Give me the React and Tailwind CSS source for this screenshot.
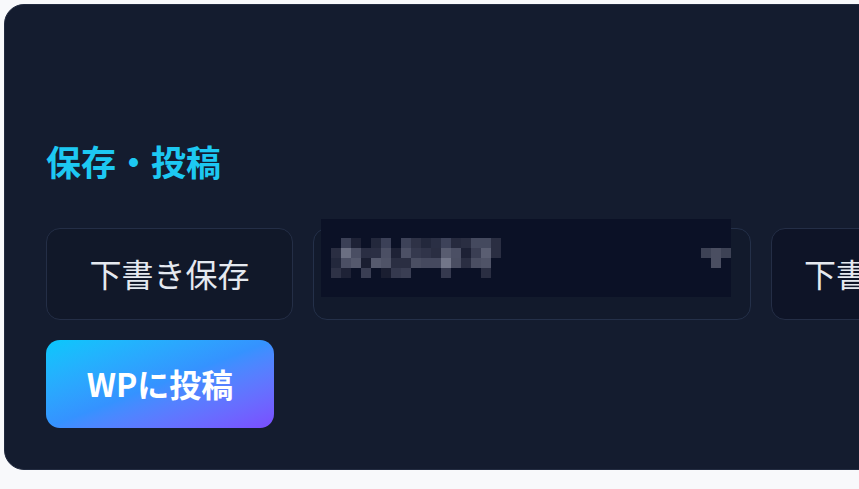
const font = { fontFamily: '"Noto Sans CJK JP", "Noto Sans", sans-serif' };

const rows = [
  ["", "#3b4056", "#1e2236", "", "#23283c", "#3b4057", "", "#3d4258", "#2e3246", "#23283c", "#2a2f44", "#3d4259", "#262a3e", "#2a2e42", "#44495e", "#44495e", "#2a2e42"],
  ["#2a2e42", "#6b6f82", "#4a4e63", "#2a2e43", "#2b2f44", "#4b4f64", "#1e2236", "#4c5065", "#35394e", "#303449", "#2a2e42", "#585c70", "#4b4f64", "#1d2135", "#3a3e53", "#5a5e72", "#2a2e42"],
  ["#23283c", "#4b4f64", "#55596d", "#1a1e31", "#565a6e", "#4f5367", "#2a2e42", "#2a2e42", "#4a4e62", "#45495e", "#45495e", "#727689", "#4a4e62", "#2a2e42", "#4a4e62", "#4f5367", ""],
  ["#2e3246", "#1e2236", "", "#3a3e53", "", "#1a1e31", "#35394e", "#3a3e53", "", "", "", "#35394e", "", "", "", "#2a2e42", ""],
];

function Mosaic() {
  return (
    <svg
      className="absolute left-[7px] top-[-10px]"
      width="410"
      height="78"
      viewBox="0 0 410 78"
    >
      <rect x="0" y="0" width="410" height="78" fill="#0b1126" />
      {rows.map((r, ri) =>
        r.map((c, ci) =>
          c ? (
            <rect key={ri + "-" + ci} x={10 + ci * 10} y={19 + ri * 10} width="10" height="10" fill={c} />
          ) : null
        )
      )}
      <rect x="380" y="29" width="10" height="10" fill="#3d4255" />
      <rect x="390" y="29" width="10" height="10" fill="#4a4e61" />
      <rect x="400" y="29" width="10" height="10" fill="#3d4255" />
      <rect x="390" y="39" width="10" height="10" fill="#4a4e61" />
    </svg>
  );
}

export default function App() {
  return (
    <div className="w-[859px] h-[489px] overflow-hidden bg-[#f8f9fb] pl-[4px] pt-[4px]" style={font}>
      <div className="w-[1100px] rounded-[20px] border border-[#222b40] bg-[#141c2f] pl-[41px] pt-[136px] pb-[41px]">
        <h2 className="text-[35px] font-bold leading-[40px] text-[#1dc8f2]">保存・投稿</h2>
        <div className="mt-[47px] flex gap-[20px]">
          <button className="flex h-[92px] w-[247px] items-center justify-center rounded-[14px] border border-[#242e46] bg-[#111829] pb-[2px] text-[32px] text-[#e5e9f0]">
            下書き保存
          </button>
          <div className="relative h-[92px] w-[438px] rounded-[14px] border border-[#243049] bg-[#121a2c]">
            <Mosaic />
          </div>
          <button className="flex h-[92px] w-[247px] items-center justify-start rounded-[14px] border border-[#242e46] bg-[#0e1427] pb-[2px] pl-[32px] text-[32px] text-[#e5e9f0]">
            下書き一覧
          </button>
        </div>
        <button className="mt-[20px] flex h-[88px] w-[228px] items-center justify-center rounded-[14px] bg-linear-to-br from-[#06c8fb] via-[#3592ff] to-[#7a4cff] pb-[2px] text-[32px] font-bold text-white">
          WPに投稿
        </button>
      </div>
    </div>
  );
}
